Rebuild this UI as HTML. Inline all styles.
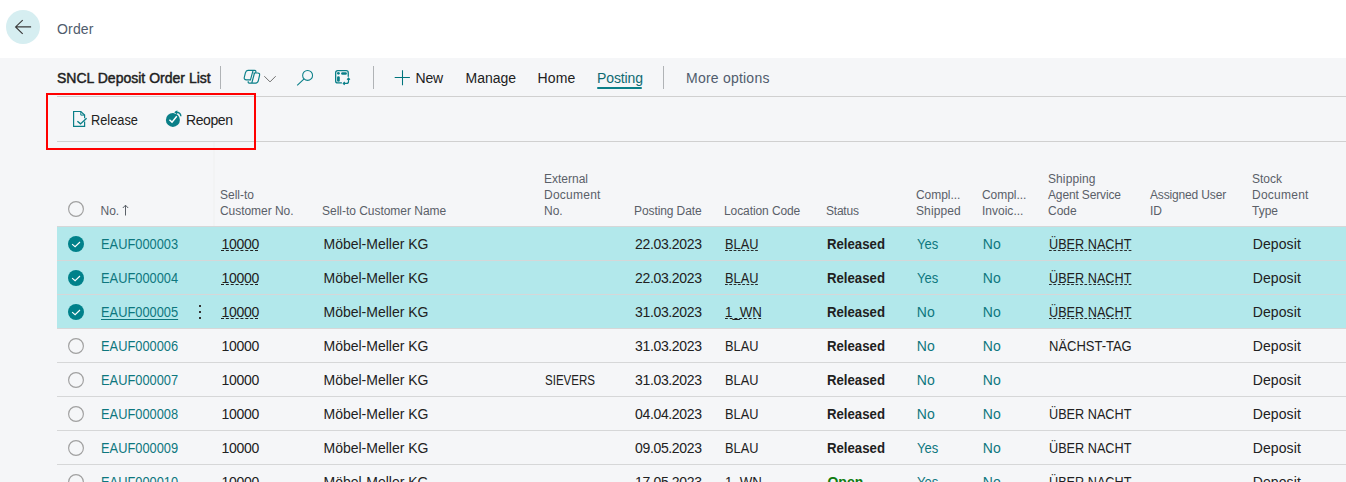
<!DOCTYPE html><html><head><meta charset="utf-8"><style>html,body{margin:0;padding:0;}body{width:1346px;height:482px;overflow:hidden;background:#f5f6f8;position:relative;font-family:"Liberation Sans", sans-serif;}.t{position:absolute;white-space:nowrap;}svg{display:block}</style></head><body><div style="position:absolute;left:0;top:0;width:1346px;height:58px;background:#fff"></div>
<div style="position:absolute;left:6px;top:10px;width:34px;height:34px;border-radius:50%;background:#d6eef1"></div>
<svg style="position:absolute;left:14px;top:18px" width="18" height="18" viewBox="0 0 18 18"><path d="M8.7 2.1 L1.6 8.9 L8.7 15.8 M1.6 8.9 H17.1" fill="none" stroke="#3b3b3b" stroke-width="1.15"/></svg>
<div style="position:absolute;left:220px;top:66px;width:1px;height:23px;background:#b0b3b6"></div>
<div style="position:absolute;left:373px;top:66px;width:1px;height:23px;background:#b0b3b6"></div>
<div style="position:absolute;left:663px;top:66px;width:1px;height:23px;background:#b0b3b6"></div>
<svg style="position:absolute;left:242px;top:68px" width="20" height="18" viewBox="0 0 20 18"><path d="M9 11.9 H4.4 C2.7 11.9 1.9 10.9 2.3 9.3 L3.4 4.8 C3.8 3.3 4.6 2.4 6 2.4 H12.6 C13.8 2.4 14.3 3.3 13.6 4.6 M11.4 5 H15.8 C17.3 5 17.9 6 17.5 7.5 L16.4 12.4 C16 14.1 15.2 15.1 13.7 15.1 H7.4 C6.3 15.1 5.9 14.4 6.4 13.3 M11 2.6 L8.4 12.2 M12.5 5 L9.8 15" fill="none" stroke="#0a7f88" stroke-width="1.15"/></svg>
<svg style="position:absolute;left:263px;top:74px" width="14" height="9" viewBox="0 0 14 9"><path d="M1.3 2.2 L7 7.9 L12.7 2.2" fill="none" stroke="#707070" stroke-width="1"/></svg>
<svg style="position:absolute;left:295px;top:68px" width="20" height="20" viewBox="0 0 20 20"><circle cx="12.6" cy="7.4" r="4.95" fill="none" stroke="#0a7f88" stroke-width="1.05"/><path d="M9.1 10.9 L2.2 17.4" fill="none" stroke="#0a7f88" stroke-width="1.1"/></svg>
<svg style="position:absolute;left:334px;top:69px" width="18" height="18" viewBox="0 0 18 18"><path d="M7.9 13.95 H3.65 a2 2 0 0 1 -2 -2 V3.65 a2 2 0 0 1 2 -2 H12.25 a2 2 0 0 1 2 2 V7.7" fill="none" stroke="#0a7f88" stroke-width="1.3"/><circle cx="4.4" cy="4.35" r="1.4" fill="#0a7f88"/><rect x="7.1" y="3.15" width="5.8" height="2.5" rx="1.25" fill="#0a7f88"/><rect x="3.05" y="7.3" width="2.75" height="5.45" rx="1.3" fill="#0a7f88"/><path d="M14.5 9.3 V12.4 a2 2 0 0 1 -2 2 H9.4 M13.1 10.6 L14.5 9.2 L15.9 10.6 M10.7 13 L9.3 14.4 L10.7 15.8" fill="none" stroke="#0a7f88" stroke-width="1.2"/></svg>
<svg style="position:absolute;left:394px;top:70px" width="16" height="16" viewBox="0 0 16 16"><path d="M8.5 0.2 V15.2 M0.7 7.5 H15.9" fill="none" stroke="#00747c" stroke-width="1.05"/></svg>
<div style="position:absolute;left:597px;top:87px;width:45px;height:2px;background:#0a7f88;border-radius:1px"></div>
<div style="position:absolute;left:57px;top:96px;width:1289px;height:1px;background:#d0d0d0"></div>
<svg style="position:absolute;left:71px;top:109px" width="18" height="20" viewBox="0 0 18 20"><path d="M13.6 12.4 V17.3 H2.6 V2.5 H9.8 L13.6 6.1 V9.3" fill="none" stroke="#0a7f88" stroke-width="1.2"/><path d="M9.8 2.5 V6.1 H13.6" fill="none" stroke="#0a7f88" stroke-width="1"/><path d="M6.4 12.3 L9.5 14.9 L15.6 9.3" fill="none" stroke="#0a7f88" stroke-width="1.4"/></svg>
<svg style="position:absolute;left:163px;top:109px" width="20" height="20" viewBox="0 0 20 20"><circle cx="9.9" cy="10.9" r="7" fill="#0a7f88"/><path d="M6.4 10.8 L9 13.1 L13.8 7.2" fill="none" stroke="#fff" stroke-width="1.5"/><path d="M11.6 3.3 C14.8 3 17.8 4.4 18 7.4" fill="none" stroke="#f5f6f8" stroke-width="3"/><path d="M12.4 3.3 C15 3.1 17.6 4.3 17.9 7.2" fill="none" stroke="#0a7f88" stroke-width="1.4"/><path d="M11.2 3.3 L14.4 1.2 L14.1 5.4 Z" fill="#0a7f88"/></svg>
<div style="position:absolute;left:57px;top:141px;width:1289px;height:1px;background:#d0d0d0"></div>
<div style="position:absolute;left:46px;top:93px;width:206px;height:53px;border:2px solid #ff0000;z-index:3"></div>
<div style="position:absolute;left:213px;top:142px;width:2px;height:84px;background:#f2f3f4"></div>
<svg style="position:absolute;left:68px;top:201px" width="16" height="16" viewBox="0 0 16 16"><circle cx="8" cy="8" r="7.4" fill="none" stroke="#a0a0a0" stroke-width="1.15"/></svg>
<svg style="position:absolute;left:121px;top:204px" width="9" height="12" viewBox="0 0 9 12"><path d="M4.5 11.5 V1.2 M1.8 4 L4.5 1.2 L7.2 4" fill="none" stroke="#5a6068" stroke-width="1"/></svg>
<div style="position:absolute;left:57px;top:226px;width:1289px;height:34px;background:#b2e8eb"></div>
<div style="position:absolute;left:57px;top:226px;width:1289px;height:1px;background:#d6d7d8;z-index:1"></div>
<svg style="position:absolute;left:68px;top:236px" width="16" height="16" viewBox="0 0 16 16"><circle cx="8" cy="8" r="8" fill="#00818a"/><path d="M4.1 8.1 L7.1 10.7 L12 6" fill="none" stroke="#fff" stroke-width="1.1"/></svg>
<div style="position:absolute;left:57px;top:260px;width:1289px;height:34px;background:#b2e8eb"></div>
<div style="position:absolute;left:57px;top:260px;width:1289px;height:1px;background:#d6d7d8;z-index:1"></div>
<svg style="position:absolute;left:68px;top:270px" width="16" height="16" viewBox="0 0 16 16"><circle cx="8" cy="8" r="8" fill="#00818a"/><path d="M4.1 8.1 L7.1 10.7 L12 6" fill="none" stroke="#fff" stroke-width="1.1"/></svg>
<div style="position:absolute;left:57px;top:294px;width:1289px;height:34px;background:#b2e8eb"></div>
<div style="position:absolute;left:57px;top:294px;width:1289px;height:1px;background:#d6d7d8;z-index:1"></div>
<svg style="position:absolute;left:68px;top:304px" width="16" height="16" viewBox="0 0 16 16"><circle cx="8" cy="8" r="8" fill="#00818a"/><path d="M4.1 8.1 L7.1 10.7 L12 6" fill="none" stroke="#fff" stroke-width="1.1"/></svg>
<div style="position:absolute;left:199px;top:305px;width:2px;height:2px;background:#333"></div>
<div style="position:absolute;left:199px;top:311px;width:2px;height:2px;background:#333"></div>
<div style="position:absolute;left:199px;top:317px;width:2px;height:2px;background:#333"></div>
<div style="position:absolute;left:57px;top:328px;width:1289px;height:1px;background:#d6d7d8;z-index:1"></div>
<svg style="position:absolute;left:68px;top:338px" width="16" height="16" viewBox="0 0 16 16"><circle cx="8" cy="8" r="7.4" fill="none" stroke="#a0a0a0" stroke-width="1.15"/></svg>
<div style="position:absolute;left:57px;top:362px;width:1289px;height:1px;background:#d6d7d8;z-index:1"></div>
<svg style="position:absolute;left:68px;top:372px" width="16" height="16" viewBox="0 0 16 16"><circle cx="8" cy="8" r="7.4" fill="none" stroke="#a0a0a0" stroke-width="1.15"/></svg>
<div style="position:absolute;left:57px;top:396px;width:1289px;height:1px;background:#d6d7d8;z-index:1"></div>
<svg style="position:absolute;left:68px;top:406px" width="16" height="16" viewBox="0 0 16 16"><circle cx="8" cy="8" r="7.4" fill="none" stroke="#a0a0a0" stroke-width="1.15"/></svg>
<div style="position:absolute;left:57px;top:430px;width:1289px;height:1px;background:#d6d7d8;z-index:1"></div>
<svg style="position:absolute;left:68px;top:440px" width="16" height="16" viewBox="0 0 16 16"><circle cx="8" cy="8" r="7.4" fill="none" stroke="#a0a0a0" stroke-width="1.15"/></svg>
<div style="position:absolute;left:57px;top:464px;width:1289px;height:1px;background:#d6d7d8;z-index:1"></div>
<svg style="position:absolute;left:68px;top:474px" width="16" height="16" viewBox="0 0 16 16"><circle cx="8" cy="8" r="7.4" fill="none" stroke="#a0a0a0" stroke-width="1.15"/></svg>
<div class="t" style="left:57px;top:20.15px;font-size:14px;line-height:18px;color:#505c6d;letter-spacing:0.176px;">Order</div>
<div class="t" style="left:57px;top:69.15px;font-size:14px;line-height:18px;color:#212121;letter-spacing:0.007px;-webkit-text-stroke:0.45px #212121;">SNCL Deposit Order List</div>
<div class="t" style="left:415.5px;top:69.15px;font-size:14px;line-height:18px;color:#212121;letter-spacing:-0.158px;">New</div>
<div class="t" style="left:465.5px;top:69.15px;font-size:14px;line-height:18px;color:#212121;letter-spacing:0.001px;">Manage</div>
<div class="t" style="left:537.5px;top:69.15px;font-size:14px;line-height:18px;color:#212121;letter-spacing:0.147px;">Home</div>
<div class="t" style="left:597px;top:69.15px;font-size:14px;line-height:18px;color:#0e6a72;letter-spacing:-0.117px;">Posting</div>
<div class="t" style="left:686px;top:69.15px;font-size:14px;line-height:18px;color:#505c6d;letter-spacing:0.224px;">More options</div>
<div class="t" style="left:91px;top:111.15px;font-size:14px;line-height:18px;color:#212121;transform:scaleX(0.9132);transform-origin:0 0;">Release</div>
<div class="t" style="left:186px;top:111.15px;font-size:14px;line-height:18px;color:#212121;letter-spacing:-0.409px;">Reopen</div>
<div class="t" style="left:100.5px;top:204.34px;font-size:12px;line-height:15px;color:#5a6068;">No.</div>
<div class="t" style="left:220px;top:188.34px;font-size:12px;line-height:15px;color:#5a6068;">Sell-to</div>
<div class="t" style="left:220px;top:204.34px;font-size:12px;line-height:15px;color:#5a6068;letter-spacing:-0.048px;">Customer No.</div>
<div class="t" style="left:322px;top:204.34px;font-size:12px;line-height:15px;color:#5a6068;letter-spacing:-0.026px;">Sell-to Customer Name</div>
<div class="t" style="left:544px;top:172.34px;font-size:12px;line-height:15px;color:#5a6068;">External</div>
<div class="t" style="left:544px;top:188.34px;font-size:12px;line-height:15px;color:#5a6068;letter-spacing:0.242px;">Document</div>
<div class="t" style="left:544px;top:204.34px;font-size:12px;line-height:15px;color:#5a6068;">No.</div>
<div class="t" style="left:634px;top:204.34px;font-size:12px;line-height:15px;color:#5a6068;letter-spacing:-0.093px;">Posting Date</div>
<div class="t" style="left:724px;top:204.34px;font-size:12px;line-height:15px;color:#5a6068;letter-spacing:-0.091px;">Location Code</div>
<div class="t" style="left:826px;top:204.34px;font-size:12px;line-height:15px;color:#5a6068;letter-spacing:-0.226px;">Status</div>
<div class="t" style="left:916px;top:188.34px;font-size:12px;line-height:15px;color:#5a6068;letter-spacing:-0.055px;">Compl...</div>
<div class="t" style="left:916px;top:204.34px;font-size:12px;line-height:15px;color:#5a6068;letter-spacing:0.109px;">Shipped</div>
<div class="t" style="left:982px;top:188.34px;font-size:12px;line-height:15px;color:#5a6068;letter-spacing:-0.055px;">Compl...</div>
<div class="t" style="left:982px;top:204.34px;font-size:12px;line-height:15px;color:#5a6068;letter-spacing:0.005px;">Invoic...</div>
<div class="t" style="left:1048px;top:172.34px;font-size:12px;line-height:15px;color:#5a6068;letter-spacing:0.097px;">Shipping</div>
<div class="t" style="left:1048px;top:188.34px;font-size:12px;line-height:15px;color:#5a6068;letter-spacing:-0.143px;">Agent Service</div>
<div class="t" style="left:1048px;top:204.34px;font-size:12px;line-height:15px;color:#5a6068;">Code</div>
<div class="t" style="left:1150px;top:188.34px;font-size:12px;line-height:15px;color:#5a6068;letter-spacing:-0.154px;">Assigned User</div>
<div class="t" style="left:1150px;top:204.34px;font-size:12px;line-height:15px;color:#5a6068;">ID</div>
<div class="t" style="left:1252px;top:172.34px;font-size:12px;line-height:15px;color:#5a6068;">Stock</div>
<div class="t" style="left:1252px;top:188.34px;font-size:12px;line-height:15px;color:#5a6068;letter-spacing:0.242px;">Document</div>
<div class="t" style="left:1252px;top:204.34px;font-size:12px;line-height:15px;color:#5a6068;">Type</div>
<div class="t" style="left:100.9px;top:234.85px;font-size:14px;line-height:18px;color:#0d777e;transform:scaleX(0.9174);transform-origin:0 0;">EAUF000003</div>
<div class="t" style="left:221.6px;top:234.85px;font-size:14px;line-height:18px;color:#212121;letter-spacing:-0.334px;text-decoration:underline dashed;text-decoration-thickness:1px;text-underline-offset:1px;">10000</div>
<div class="t" style="left:323.5px;top:234.85px;font-size:14px;line-height:18px;color:#212121;letter-spacing:-0.002px;">Möbel-Meller KG</div>
<div class="t" style="left:635px;top:234.85px;font-size:14px;line-height:18px;color:#212121;letter-spacing:-0.342px;">22.03.2023</div>
<div class="t" style="left:725px;top:234.85px;font-size:14px;line-height:18px;color:#212121;transform:scaleX(0.9135);transform-origin:0 0;text-decoration:underline dashed;text-decoration-thickness:1px;text-underline-offset:1px;">BLAU</div>
<div class="t" style="left:827.4px;top:234.85px;font-size:14px;line-height:18px;color:#212121;font-weight:700;transform:scaleX(0.9424);transform-origin:0 0;">Released</div>
<div class="t" style="left:916.8px;top:234.85px;font-size:14px;line-height:18px;color:#0d777e;transform:scaleX(0.9293);transform-origin:0 0;">Yes</div>
<div class="t" style="left:982.8px;top:234.85px;font-size:14px;line-height:18px;color:#0d777e;">No</div>
<div class="t" style="left:1049.4px;top:234.85px;font-size:14px;line-height:18px;color:#212121;transform:scaleX(0.9054);transform-origin:0 0;text-decoration:underline dashed;text-decoration-thickness:1px;text-underline-offset:1px;">ÜBER NACHT</div>
<div class="t" style="left:1252.8px;top:234.85px;font-size:14px;line-height:18px;color:#212121;letter-spacing:0.089px;">Deposit</div>
<div class="t" style="left:100.9px;top:268.85px;font-size:14px;line-height:18px;color:#0d777e;transform:scaleX(0.9174);transform-origin:0 0;">EAUF000004</div>
<div class="t" style="left:221.6px;top:268.85px;font-size:14px;line-height:18px;color:#212121;letter-spacing:-0.334px;text-decoration:underline dashed;text-decoration-thickness:1px;text-underline-offset:1px;">10000</div>
<div class="t" style="left:323.5px;top:268.85px;font-size:14px;line-height:18px;color:#212121;letter-spacing:-0.002px;">Möbel-Meller KG</div>
<div class="t" style="left:635px;top:268.85px;font-size:14px;line-height:18px;color:#212121;letter-spacing:-0.342px;">22.03.2023</div>
<div class="t" style="left:725px;top:268.85px;font-size:14px;line-height:18px;color:#212121;transform:scaleX(0.9135);transform-origin:0 0;text-decoration:underline dashed;text-decoration-thickness:1px;text-underline-offset:1px;">BLAU</div>
<div class="t" style="left:827.4px;top:268.85px;font-size:14px;line-height:18px;color:#212121;font-weight:700;transform:scaleX(0.9424);transform-origin:0 0;">Released</div>
<div class="t" style="left:916.8px;top:268.85px;font-size:14px;line-height:18px;color:#0d777e;transform:scaleX(0.9293);transform-origin:0 0;">Yes</div>
<div class="t" style="left:982.8px;top:268.85px;font-size:14px;line-height:18px;color:#0d777e;">No</div>
<div class="t" style="left:1049.4px;top:268.85px;font-size:14px;line-height:18px;color:#212121;transform:scaleX(0.9054);transform-origin:0 0;text-decoration:underline dashed;text-decoration-thickness:1px;text-underline-offset:1px;">ÜBER NACHT</div>
<div class="t" style="left:1252.8px;top:268.85px;font-size:14px;line-height:18px;color:#212121;letter-spacing:0.089px;">Deposit</div>
<div class="t" style="left:100.9px;top:302.85px;font-size:14px;line-height:18px;color:#0d777e;transform:scaleX(0.9174);transform-origin:0 0;text-decoration:underline;text-underline-offset:1.5px;">EAUF000005</div>
<div class="t" style="left:221.6px;top:302.85px;font-size:14px;line-height:18px;color:#212121;letter-spacing:-0.334px;text-decoration:underline dashed;text-decoration-thickness:1px;text-underline-offset:1px;">10000</div>
<div class="t" style="left:323.5px;top:302.85px;font-size:14px;line-height:18px;color:#212121;letter-spacing:-0.002px;">Möbel-Meller KG</div>
<div class="t" style="left:635px;top:302.85px;font-size:14px;line-height:18px;color:#212121;letter-spacing:-0.342px;">31.03.2023</div>
<div class="t" style="left:725px;top:302.85px;font-size:14px;line-height:18px;color:#212121;transform:scaleX(0.9497);transform-origin:0 0;text-decoration:underline dashed;text-decoration-thickness:1px;text-underline-offset:1px;">1_WN</div>
<div class="t" style="left:827.4px;top:302.85px;font-size:14px;line-height:18px;color:#212121;font-weight:700;transform:scaleX(0.9424);transform-origin:0 0;">Released</div>
<div class="t" style="left:916.8px;top:302.85px;font-size:14px;line-height:18px;color:#0d777e;">No</div>
<div class="t" style="left:982.8px;top:302.85px;font-size:14px;line-height:18px;color:#0d777e;">No</div>
<div class="t" style="left:1049.4px;top:302.85px;font-size:14px;line-height:18px;color:#212121;transform:scaleX(0.9054);transform-origin:0 0;text-decoration:underline dashed;text-decoration-thickness:1px;text-underline-offset:1px;">ÜBER NACHT</div>
<div class="t" style="left:1252.8px;top:302.85px;font-size:14px;line-height:18px;color:#212121;letter-spacing:0.089px;">Deposit</div>
<div class="t" style="left:100.9px;top:336.85px;font-size:14px;line-height:18px;color:#0d777e;transform:scaleX(0.9174);transform-origin:0 0;">EAUF000006</div>
<div class="t" style="left:221.6px;top:336.85px;font-size:14px;line-height:18px;color:#212121;letter-spacing:-0.334px;">10000</div>
<div class="t" style="left:323.5px;top:336.85px;font-size:14px;line-height:18px;color:#212121;letter-spacing:-0.002px;">Möbel-Meller KG</div>
<div class="t" style="left:635px;top:336.85px;font-size:14px;line-height:18px;color:#212121;letter-spacing:-0.342px;">31.03.2023</div>
<div class="t" style="left:725px;top:336.85px;font-size:14px;line-height:18px;color:#212121;transform:scaleX(0.9135);transform-origin:0 0;">BLAU</div>
<div class="t" style="left:827.4px;top:336.85px;font-size:14px;line-height:18px;color:#212121;font-weight:700;transform:scaleX(0.9424);transform-origin:0 0;">Released</div>
<div class="t" style="left:916.8px;top:336.85px;font-size:14px;line-height:18px;color:#0d777e;">No</div>
<div class="t" style="left:982.8px;top:336.85px;font-size:14px;line-height:18px;color:#0d777e;">No</div>
<div class="t" style="left:1049.4px;top:336.85px;font-size:14px;line-height:18px;color:#212121;transform:scaleX(0.9274);transform-origin:0 0;">NÄCHST-TAG</div>
<div class="t" style="left:1252.8px;top:336.85px;font-size:14px;line-height:18px;color:#212121;letter-spacing:0.089px;">Deposit</div>
<div class="t" style="left:100.9px;top:370.85px;font-size:14px;line-height:18px;color:#0d777e;transform:scaleX(0.9174);transform-origin:0 0;">EAUF000007</div>
<div class="t" style="left:221.6px;top:370.85px;font-size:14px;line-height:18px;color:#212121;letter-spacing:-0.334px;">10000</div>
<div class="t" style="left:323.5px;top:370.85px;font-size:14px;line-height:18px;color:#212121;letter-spacing:-0.002px;">Möbel-Meller KG</div>
<div class="t" style="left:545.2px;top:370.85px;font-size:14px;line-height:18px;color:#212121;transform:scaleX(0.8241);transform-origin:0 0;">SIEVERS</div>
<div class="t" style="left:635px;top:370.85px;font-size:14px;line-height:18px;color:#212121;letter-spacing:-0.342px;">31.03.2023</div>
<div class="t" style="left:725px;top:370.85px;font-size:14px;line-height:18px;color:#212121;transform:scaleX(0.9135);transform-origin:0 0;">BLAU</div>
<div class="t" style="left:827.4px;top:370.85px;font-size:14px;line-height:18px;color:#212121;font-weight:700;transform:scaleX(0.9424);transform-origin:0 0;">Released</div>
<div class="t" style="left:916.8px;top:370.85px;font-size:14px;line-height:18px;color:#0d777e;">No</div>
<div class="t" style="left:982.8px;top:370.85px;font-size:14px;line-height:18px;color:#0d777e;">No</div>
<div class="t" style="left:1252.8px;top:370.85px;font-size:14px;line-height:18px;color:#212121;letter-spacing:0.089px;">Deposit</div>
<div class="t" style="left:100.9px;top:404.85px;font-size:14px;line-height:18px;color:#0d777e;transform:scaleX(0.9174);transform-origin:0 0;">EAUF000008</div>
<div class="t" style="left:221.6px;top:404.85px;font-size:14px;line-height:18px;color:#212121;letter-spacing:-0.334px;">10000</div>
<div class="t" style="left:323.5px;top:404.85px;font-size:14px;line-height:18px;color:#212121;letter-spacing:-0.002px;">Möbel-Meller KG</div>
<div class="t" style="left:635px;top:404.85px;font-size:14px;line-height:18px;color:#212121;letter-spacing:-0.342px;">04.04.2023</div>
<div class="t" style="left:725px;top:404.85px;font-size:14px;line-height:18px;color:#212121;transform:scaleX(0.9135);transform-origin:0 0;">BLAU</div>
<div class="t" style="left:827.4px;top:404.85px;font-size:14px;line-height:18px;color:#212121;font-weight:700;transform:scaleX(0.9424);transform-origin:0 0;">Released</div>
<div class="t" style="left:916.8px;top:404.85px;font-size:14px;line-height:18px;color:#0d777e;">No</div>
<div class="t" style="left:982.8px;top:404.85px;font-size:14px;line-height:18px;color:#0d777e;">No</div>
<div class="t" style="left:1049.4px;top:404.85px;font-size:14px;line-height:18px;color:#212121;transform:scaleX(0.9054);transform-origin:0 0;">ÜBER NACHT</div>
<div class="t" style="left:1252.8px;top:404.85px;font-size:14px;line-height:18px;color:#212121;letter-spacing:0.089px;">Deposit</div>
<div class="t" style="left:100.9px;top:438.85px;font-size:14px;line-height:18px;color:#0d777e;transform:scaleX(0.9174);transform-origin:0 0;">EAUF000009</div>
<div class="t" style="left:221.6px;top:438.85px;font-size:14px;line-height:18px;color:#212121;letter-spacing:-0.334px;">10000</div>
<div class="t" style="left:323.5px;top:438.85px;font-size:14px;line-height:18px;color:#212121;letter-spacing:-0.002px;">Möbel-Meller KG</div>
<div class="t" style="left:635px;top:438.85px;font-size:14px;line-height:18px;color:#212121;letter-spacing:-0.342px;">09.05.2023</div>
<div class="t" style="left:725px;top:438.85px;font-size:14px;line-height:18px;color:#212121;transform:scaleX(0.9135);transform-origin:0 0;">BLAU</div>
<div class="t" style="left:827.4px;top:438.85px;font-size:14px;line-height:18px;color:#212121;font-weight:700;transform:scaleX(0.9424);transform-origin:0 0;">Released</div>
<div class="t" style="left:916.8px;top:438.85px;font-size:14px;line-height:18px;color:#0d777e;transform:scaleX(0.9293);transform-origin:0 0;">Yes</div>
<div class="t" style="left:982.8px;top:438.85px;font-size:14px;line-height:18px;color:#0d777e;">No</div>
<div class="t" style="left:1049.4px;top:438.85px;font-size:14px;line-height:18px;color:#212121;transform:scaleX(0.9054);transform-origin:0 0;">ÜBER NACHT</div>
<div class="t" style="left:1252.8px;top:438.85px;font-size:14px;line-height:18px;color:#212121;letter-spacing:0.089px;">Deposit</div>
<div class="t" style="left:100.9px;top:472.85px;font-size:14px;line-height:18px;color:#0d777e;transform:scaleX(0.9174);transform-origin:0 0;">EAUF000010</div>
<div class="t" style="left:221.6px;top:472.85px;font-size:14px;line-height:18px;color:#212121;letter-spacing:-0.334px;">10000</div>
<div class="t" style="left:323.5px;top:472.85px;font-size:14px;line-height:18px;color:#212121;letter-spacing:-0.002px;">Möbel-Meller KG</div>
<div class="t" style="left:635px;top:472.85px;font-size:14px;line-height:18px;color:#212121;letter-spacing:-0.342px;">17.05.2023</div>
<div class="t" style="left:725px;top:472.85px;font-size:14px;line-height:18px;color:#212121;transform:scaleX(0.9497);transform-origin:0 0;">1_WN</div>
<div class="t" style="left:827.4px;top:472.85px;font-size:14px;line-height:18px;color:#107c10;font-weight:700;letter-spacing:0.073px;">Open</div>
<div class="t" style="left:916.8px;top:472.85px;font-size:14px;line-height:18px;color:#0d777e;transform:scaleX(0.9293);transform-origin:0 0;">Yes</div>
<div class="t" style="left:982.8px;top:472.85px;font-size:14px;line-height:18px;color:#0d777e;">No</div>
<div class="t" style="left:1049.4px;top:472.85px;font-size:14px;line-height:18px;color:#212121;transform:scaleX(0.9054);transform-origin:0 0;">ÜBER NACHT</div>
<div class="t" style="left:1252.8px;top:472.85px;font-size:14px;line-height:18px;color:#212121;letter-spacing:0.089px;">Deposit</div></body></html>
